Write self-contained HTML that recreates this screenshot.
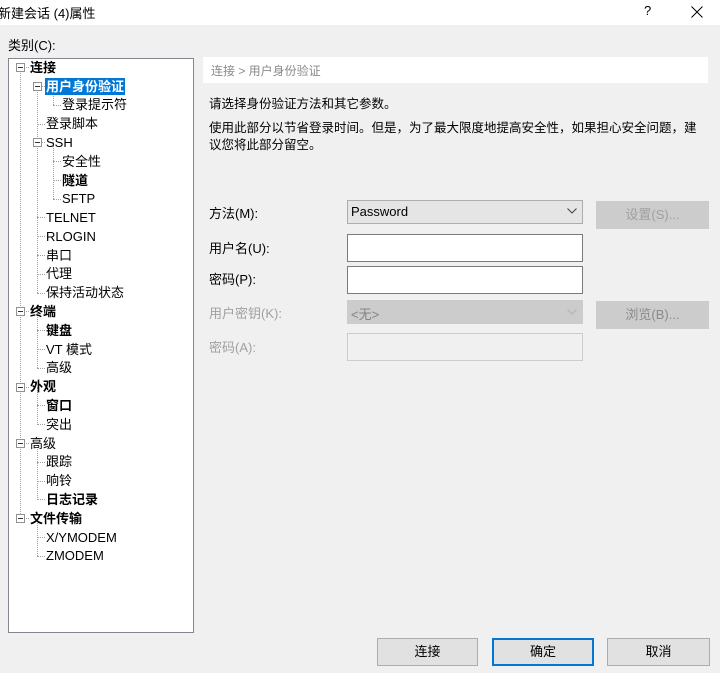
<!DOCTYPE html>
<html><head><meta charset="utf-8"><style>
*{margin:0;padding:0;box-sizing:border-box}
body{width:720px;height:673px;background:#f0f0f0;font-family:"Liberation Sans","Noto Sans CJK SC",sans-serif;font-size:13px;color:#000;position:relative;overflow:hidden}
.a{position:absolute;white-space:nowrap}
.r{position:absolute;height:19px;line-height:19px;white-space:nowrap}
.b{font-weight:bold}
.vl{position:absolute;width:0;border-left:1px dotted #a0a0a0}
.hl{position:absolute;height:0;border-top:1px dotted #a0a0a0}
.bx{position:absolute;width:9px;height:9px;border:1px solid #919191;background:#fff}
.bx:after{content:"";position:absolute;left:1px;top:3px;width:5px;height:1px;background:#333}
.inp{position:absolute;background:#fff;border:1px solid #7a7a7a}
.btn{position:absolute;background:#e1e1e1;border:1px solid #adadad;text-align:center;line-height:25px}
.dis{color:#a0a0a0}
</style></head><body>
<div class="a" style="left:0;top:0;width:720px;height:25px;background:#fff"></div>
<div class="a" style="left:-2px;top:3px;font-size:13px">新建会话 (4)属性</div>
<div class="a" style="left:644px;top:3px;font-size:13px">?</div>
<svg class="a" style="left:691px;top:6px" width="12" height="12"><path d="M0.5 0.5L11.5 11.5M11.5 0.5L0.5 11.5" stroke="#000" stroke-width="1"/></svg>
<div class="a" style="left:8px;top:35px">类别(C):</div>
<div class="a" style="left:8px;top:58px;width:186px;height:575px;background:#fff;border:1px solid #828790"></div>

<div class="vl" style="left:20px;top:67px;height:451px"></div>
<div class="vl" style="left:37px;top:86px;height:207px"></div>
<div class="vl" style="left:53px;top:86px;height:19px"></div>
<div class="vl" style="left:53px;top:142px;height:57px"></div>
<div class="vl" style="left:37px;top:311px;height:57px"></div>
<div class="vl" style="left:37px;top:387px;height:38px"></div>
<div class="vl" style="left:37px;top:443px;height:57px"></div>
<div class="vl" style="left:37px;top:518px;height:38px"></div>

<div class="hl" style="left:20px;top:67px;width:9px"></div><div class="bx" style="left:16px;top:63px"></div><div class="r b" style="left:30px;top:58px">连接</div>
<div class="hl" style="left:37px;top:86px;width:8px"></div><div class="bx" style="left:33px;top:82px"></div><div class="r b" style="left:45px;top:77px;background:#0078d7;color:#fff;padding:0 1px;height:17px;line-height:17px;margin-top:1px">用户身份验证</div>
<div class="hl" style="left:53px;top:105px;width:8px"></div><div class="r" style="left:62px;top:95px">登录提示符</div>
<div class="hl" style="left:37px;top:124px;width:8px"></div><div class="r" style="left:46px;top:114px">登录脚本</div>
<div class="hl" style="left:37px;top:142px;width:8px"></div><div class="bx" style="left:33px;top:138px"></div><div class="r" style="left:46px;top:133px">SSH</div>
<div class="hl" style="left:53px;top:161px;width:8px"></div><div class="r" style="left:62px;top:152px">安全性</div>
<div class="hl" style="left:53px;top:180px;width:8px"></div><div class="r b" style="left:62px;top:171px">隧道</div>
<div class="hl" style="left:53px;top:199px;width:8px"></div><div class="r" style="left:62px;top:189px">SFTP</div>
<div class="hl" style="left:37px;top:217px;width:8px"></div><div class="r" style="left:46px;top:208px">TELNET</div>
<div class="hl" style="left:37px;top:236px;width:8px"></div><div class="r" style="left:46px;top:227px">RLOGIN</div>
<div class="hl" style="left:37px;top:255px;width:8px"></div><div class="r" style="left:46px;top:246px">串口</div>
<div class="hl" style="left:37px;top:274px;width:8px"></div><div class="r" style="left:46px;top:264px">代理</div>
<div class="hl" style="left:37px;top:293px;width:8px"></div><div class="r" style="left:46px;top:283px">保持活动状态</div>
<div class="hl" style="left:20px;top:311px;width:9px"></div><div class="bx" style="left:16px;top:307px"></div><div class="r b" style="left:30px;top:302px">终端</div>
<div class="hl" style="left:37px;top:330px;width:8px"></div><div class="r b" style="left:46px;top:321px">键盘</div>
<div class="hl" style="left:37px;top:349px;width:8px"></div><div class="r" style="left:46px;top:340px">VT 模式</div>
<div class="hl" style="left:37px;top:368px;width:8px"></div><div class="r" style="left:46px;top:358px">高级</div>
<div class="hl" style="left:20px;top:387px;width:9px"></div><div class="bx" style="left:16px;top:383px"></div><div class="r b" style="left:30px;top:377px">外观</div>
<div class="hl" style="left:37px;top:405px;width:8px"></div><div class="r b" style="left:46px;top:396px">窗口</div>
<div class="hl" style="left:37px;top:424px;width:8px"></div><div class="r" style="left:46px;top:415px">突出</div>
<div class="hl" style="left:20px;top:443px;width:9px"></div><div class="bx" style="left:16px;top:439px"></div><div class="r" style="left:30px;top:434px">高级</div>
<div class="hl" style="left:37px;top:462px;width:8px"></div><div class="r" style="left:46px;top:452px">跟踪</div>
<div class="hl" style="left:37px;top:481px;width:8px"></div><div class="r" style="left:46px;top:471px">响铃</div>
<div class="hl" style="left:37px;top:499px;width:8px"></div><div class="r b" style="left:46px;top:490px">日志记录</div>
<div class="hl" style="left:20px;top:518px;width:9px"></div><div class="bx" style="left:16px;top:514px"></div><div class="r b" style="left:30px;top:509px">文件传输</div>
<div class="hl" style="left:37px;top:537px;width:8px"></div><div class="r" style="left:46px;top:528px">X/YMODEM</div>
<div class="hl" style="left:37px;top:556px;width:8px"></div><div class="r" style="left:46px;top:546px">ZMODEM</div>

<div class="a" style="left:203px;top:57px;width:505px;height:26px;background:#fff"></div>
<div class="a" style="left:211px;top:62px;color:#8a8a8a;font-size:12px">连接 &gt; 用户身份验证</div>
<div class="a" style="left:209px;top:93px;font-size:12.5px">请选择身份验证方法和其它参数。</div>
<div class="a" style="left:209px;top:117px;font-size:12.5px">使用此部分以节省登录时间。但是，为了最大限度地提高安全性，如果担心安全问题，建</div>
<div class="a" style="left:209px;top:134px;font-size:12.5px">议您将此部分留空。</div>

<div class="a" style="left:209px;top:203px">方法(M):</div>
<div class="a" style="left:347px;top:200px;width:236px;height:24px;background:#e5e5e5;border:1px solid #adadad"></div>
<div class="a" style="left:351px;top:204px">Password</div>
<svg class="a" style="left:567px;top:208px" width="10" height="6"><path d="M0.5 0.5L5 5L9.5 0.5" stroke="#444" fill="none"/></svg>
<div class="btn dis" style="left:596px;top:201px;width:113px;height:28px;background:#cccccc;border-color:#cccccc">设置(S)...</div>
<div class="a" style="left:209px;top:238px">用户名(U):</div>
<div class="inp" style="left:347px;top:234px;width:236px;height:28px"></div>
<div class="a" style="left:209px;top:269px">密码(P):</div>
<div class="inp" style="left:347px;top:266px;width:236px;height:28px"></div>
<div class="a dis" style="left:209px;top:303px">用户密钥(K):</div>
<div class="a" style="left:347px;top:300px;width:236px;height:24px;background:#cccccc"></div>
<div class="a dis" style="left:351px;top:304px;color:#838383">&lt;无&gt;</div>
<svg class="a" style="left:567px;top:309px" width="10" height="6"><path d="M0.5 0.5L5 5L9.5 0.5" stroke="#b0b0b0" fill="none"/></svg>
<div class="btn dis" style="left:596px;top:301px;width:113px;height:28px;background:#cccccc;border-color:#cccccc;color:#8a8a8a">浏览(B)...</div>
<div class="a dis" style="left:209px;top:337px">密码(A):</div>
<div class="a" style="left:347px;top:333px;width:236px;height:28px;background:#f0f0f0;border:1px solid #cccccc"></div>

<div class="btn" style="left:377px;top:638px;width:101px;height:28px">连接</div>
<div class="btn" style="left:492px;top:638px;width:102px;height:28px;border:2px solid #0078d7;line-height:24px">确定</div>
<div class="btn" style="left:607px;top:638px;width:103px;height:28px">取消</div>
</body></html>
